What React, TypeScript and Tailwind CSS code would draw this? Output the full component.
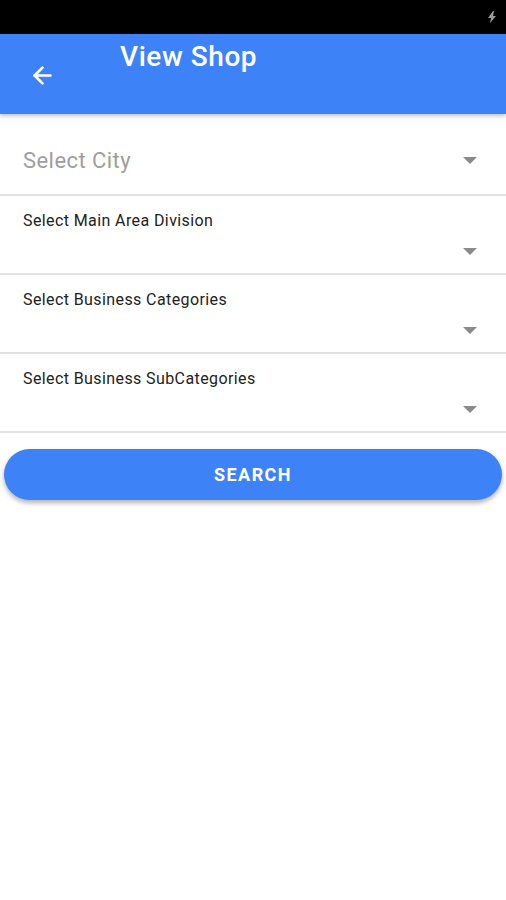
import { ArrowLeft } from 'lucide-react';

const fields = [
    'Select Main Area Division',
    'Select Business Categories',
    'Select Business SubCategories',
];

const Caret = () => (
    <svg width="14" height="7" viewBox="0 0 14 7" className="shrink-0">
        <path d="M0 0h14L7 7z" fill="#8a8a8a" />
    </svg>
);

export default function App() {
    return (
        <div className="w-[506px] h-[900px] bg-white flex flex-col font-['Roboto',sans-serif]">
            {/* status bar */}
            <div className="h-[34px] bg-black flex items-center justify-end pr-[10px]">
                <svg width="8" height="12" viewBox="0 0 8 12">
                    <path d="M5 0L0 7h3l-1 5 6-7H5l1-5z" fill="#9a9a9a" />
                </svg>
            </div>

            {/* app bar */}
            <div className="h-[80px] bg-[#3d82f6] relative shadow-[0_2px_4px_rgba(0,0,0,0.25)] z-10 flex">
                <div className="w-[120px] flex items-center pl-[29px] pt-[2px]">
                    <ArrowLeft size={27} color="white" strokeWidth={2.4} />
                </div>
                <h1 className="text-white text-[28px] font-medium leading-none pt-[9px] tracking-[0.02em]">View Shop</h1>
            </div>

            {/* city */}
            <div className="h-[82px] border-b-2 border-[#e2e2e2] flex items-center justify-between pl-[23px] pr-[29px] pt-[12px]">
                <span className="text-[22px] text-[#9e9e9e] tracking-[0.02em]">Select City</span>
                <Caret />
            </div>

            {fields.map((label) => (
                <div key={label} className="h-[79px] border-b-2 border-[#e2e2e2] pl-[23px] pr-[29px] flex flex-col">
                    <span className="text-[16px] text-[#222] pt-[15px] leading-[20px] tracking-[0.025em]">{label}</span>
                    <div className="flex justify-end mt-[17px]">
                        <Caret />
                    </div>
                </div>
            ))}

            <div className="px-[4px] pt-[16px]">
                <button
                    type="button"
                    className="w-full h-[51px] rounded-full bg-[#3d82f6] text-white text-[18px] font-bold tracking-[0.08em] shadow-[0_3px_5px_rgba(0,0,0,0.3)]"
                >
                    SEARCH
                </button>
            </div>
        </div>
    );
}
